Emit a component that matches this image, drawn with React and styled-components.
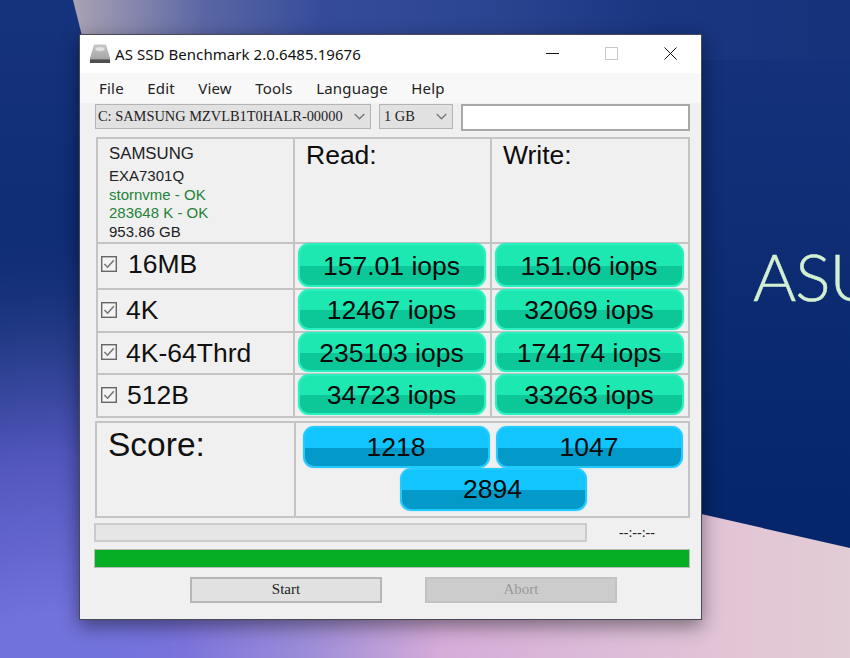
import React from "react";
import styled, { createGlobalStyle } from "styled-components";

const Global = createGlobalStyle`
  html, body { margin: 0; padding: 0; width: 850px; height: 658px; overflow: hidden; background: #0d2c70; }
  * { box-sizing: border-box; }
`;

const Desktop = styled.div`
  position: relative;
  width: 850px;
  height: 658px;
  overflow: hidden;
`;
const WallpaperArt = styled.svg`
  position: absolute;
  inset: 0;
`;
const Brand = styled.div`
  position: absolute;
  left: 753px;
  top: 234px;
  font: 300 66px/84px Lato, "Open Sans", sans-serif;
  letter-spacing: -1px;
  -webkit-text-stroke: 0.5px #d3f0d2;
  color: #d3f0d2;
  white-space: nowrap;
`;
const Window = styled.div`
  position: absolute;
  left: 79px;
  top: 34px;
  width: 623px;
  height: 586px;
  border: 1px solid rgba(45, 45, 60, 0.85);
  background: #f0f0f0;
  box-shadow: 0 6px 18px rgba(0, 0, 0, 0.45);
  display: flex;
  flex-direction: column;
`;
const TitleBar = styled.div`
  height: 38px;
  background: #fff;
  display: flex;
  align-items: center;
  padding: 0 0 1px 10px;
  flex: none;
`;
const Title = styled.span`
  margin-left: 5px;
  font: 400 15px "Noto Sans", sans-serif;
  letter-spacing: 0.06px;
  color: #111;
  white-space: nowrap;
  flex: 1;
`;
const Controls = styled.div`
  display: flex;
  align-items: center;
  gap: 46px;
  padding-right: 24px;
`;
const MenuBar = styled.div`
  height: 30px;
  background: #f8f8f8;
  display: flex;
  align-items: center;
  gap: 23.4px;
  padding: 0 0 1px 19px;
  flex: none;
`;
const MenuItem = styled.span`
  font: 400 15px "Noto Sans", sans-serif;
  letter-spacing: 0.2px;
  color: #222;
`;
const ToolBar = styled.div`
  display: flex;
  align-items: flex-start;
  gap: 8px;
  height: 34px;
  padding: 1px 0 0 15px;
  flex: none;
`;
const Select = styled.div`
  width: ${(p) => p.$w}px;
  height: 25px;
  background: #e1e1e1;
  border: 1px solid #b4b4b4;
  display: flex;
  align-items: center;
  justify-content: space-between;
  padding: 0 5px 0 2px;
  font: 400 14.4px "Liberation Serif", serif;
  color: #222;
  white-space: nowrap;
`;
const SizeLabel = styled.span`
  padding-left: 2px;
`;
const TextField = styled.div`
  width: 229px;
  height: 27px;
  background: #fff;
  border: 2px solid #a8a8a8;
`;
const Results = styled.div`
  margin-left: 16px;
  width: 594px;
  display: grid;
  grid-template-columns: 195px 195px 196px;
  grid-template-rows: 103px 44px 41px 40px 41px;
  gap: 2px;
  padding: 2px;
  background: #c4c4c4;
  flex: none;
`;
const Cell = styled.div`
  background: #f0f0f0;
  min-width: 0;
`;
const DriveCell = styled(Cell)`
  padding: 4px 0 0 11px;
  font: 400 15px/18.5px "Liberation Sans", sans-serif;
  color: #222;
`;
const DriveName = styled.div`
  font-size: 16.8px;
  line-height: 22px;
  margin-bottom: 2px;
`;
const DriveOk = styled.div`
  color: #24823a;
`;
const ColumnHead = styled(Cell)`
  padding: 0 0 0 11px;
  font: 400 26.5px/32px "Liberation Sans", sans-serif;
  color: #0c0c0c;
`;
const LabelCell = styled(Cell)`
  display: flex;
  align-items: center;
  gap: ${(p) => p.$gap}px;
  padding: 0 0 ${(p) => p.$lift || 0}px 3px;
  font: 400 26.5px "Liberation Sans", sans-serif;
  color: #111;
`;
const CheckMark = styled.svg`
  flex: none;
  margin-top: -2px;
`;
const TileCell = styled(Cell)`
  padding: 0 4px 0 3px;
  display: flex;
`;
const Tile = styled.div`
  flex: 1;
  display: flex;
  align-items: center;
  justify-content: center;
  margin: ${(p) => (p.$flush ? "0" : "-1px 0 1px")};
  padding: ${(p) => (p.$flush ? "0 1px 0 0" : "2px 1px 0 0")};
  border-radius: 11px;
  border: 2px solid ${(p) => p.$edge};
  box-shadow: 0 0 1px ${(p) => p.$edge};
  background: linear-gradient(${(p) => p.$top} 0 52%, ${(p) => p.$bottom} 52% 100%);
  font: 400 26.5px "Liberation Sans", sans-serif;
  color: #0a0a0a;
  white-space: nowrap;
`;
const ScorePanel = styled.div`
  margin: 3px 0 0 15px;
  width: 595px;
  height: 97px;
  display: grid;
  grid-template-columns: 197px 1fr;
  gap: 2px;
  padding: 2px;
  background: #c4c4c4;
  flex: none;
`;
const ScoreLabel = styled(Cell)`
  padding: 2px 0 0 11px;
  font: 400 33.5px/40px "Liberation Sans", sans-serif;
  color: #111;
`;
const ScoreGrid = styled(Cell)`
  display: grid;
  grid-template-columns: 187px 187px;
  grid-template-rows: 42px 43px;
  column-gap: 6px;
  padding: 3px 0 0 7px;
`;
const TotalTile = styled(Tile)`
  grid-column: 1 / -1;
  justify-self: center;
  width: 187px;
`;
const StatusRow = styled.div`
  display: flex;
  align-items: center;
  margin: 5px 0 0 14px;
  height: 19px;
  flex: none;
`;
const Progress = styled.div`
  width: 493px;
  height: 19px;
  background: #e6e6e6;
  border: 2px solid #cbcbcb;
`;
const Timer = styled.div`
  width: 100px;
  text-align: center;
  font: 400 14px "Liberation Serif", serif;
  color: #222;
`;
const Meter = styled.div`
  margin: 7px 0 0 14px;
  width: 596px;
  height: 19px;
  background: #06ae24;
  border: 1px solid #b9b9b9;
  flex: none;
`;
const Actions = styled.div`
  display: flex;
  gap: 43px;
  margin: 9px 0 0 110px;
`;
const ActionButton = styled.div`
  width: 192px;
  height: 26px;
  display: flex;
  align-items: center;
  justify-content: center;
  padding-bottom: 2px;
  background: ${(p) => (p.$off ? "#cccccc" : "#e1e1e1")};
  border: 2px solid ${(p) => (p.$off ? "#c2c2c2" : "#b6b6b6")};
  color: ${(p) => (p.$off ? "#9a9a9a" : "#222")};
  font: 400 15px "Liberation Serif", serif;
`;

const green = { $top: "#1ee8b2", $bottom: "#0cc899", $edge: "#2aefbe" };
const blue = { $top: "#13c5ff", $bottom: "#0399c9", $edge: "#22caff", $flush: true };

const rows = [
  { name: "16MB", read: "157.01 iops", write: "151.06 iops", gap: 11, lift: 3 },
  { name: "4K", read: "12467 iops", write: "32069 iops", gap: 9 },
  { name: "4K-64Thrd", read: "235103 iops", write: "174174 iops", gap: 9 },
  { name: "512B", read: "34723 iops", write: "33263 iops", gap: 10 },
];

const Checkbox = () => (
  <CheckMark width="16" height="16" viewBox="0 0 16 16" fill="none">
    <rect x="0.7" y="0.7" width="14.6" height="14.6" stroke="#666" strokeWidth="1.4" fill="#f4f4f4" />
    <path d="M3.4 8 6.6 11.2 12.8 4.2" stroke="#777" strokeWidth="1.6" />
  </CheckMark>
);

const Chevron = () => (
  <svg width="11" height="7" viewBox="0 0 11 7" fill="none" style={{ flex: "none" }}>
    <path d="M0.7 1 5.5 5.8 10.3 1" stroke="#777" strokeWidth="1.4" />
  </svg>
);

const DiskIcon = () => (
  <svg width="20" height="19" viewBox="0 0 20 19">
    <defs>
      <linearGradient id="disk" x1="0" y1="0" x2="0" y2="1">
        <stop offset="0" stopColor="#c8c8c8" />
        <stop offset="0.75" stopColor="#a8a8a8" />
        <stop offset="1" stopColor="#5c5c5c" />
      </linearGradient>
    </defs>
    <path d="M4 0.5H16L20 14V19H0V14Z" fill="url(#disk)" />
    <ellipse cx="10" cy="5" rx="4.5" ry="2" fill="#e2e2e2" />
    <rect x="0" y="15.5" width="20" height="3.5" fill="#4e4e4e" />
  </svg>
);

export default function App() {
  return (
    <Desktop>
      <Global />
      <WallpaperArt width="850" height="658" viewBox="0 0 850 658">
        <defs>
          <linearGradient id="base" x1="0" y1="0" x2="0" y2="1">
            <stop offset="0" stopColor="#16337d" />
            <stop offset="0.76" stopColor="#05266a" />
          </linearGradient>
          <linearGradient id="band" x1="0" y1="0" x2="1" y2="0">
            <stop offset="0" stopColor="#aaa2b4" />
            <stop offset="0.17" stopColor="#5a66a4" />
            <stop offset="0.32" stopColor="#364c9b" />
            <stop offset="0.55" stopColor="#2a4490" />
            <stop offset="0.75" stopColor="#1a3681" />
            <stop offset="1" stopColor="#16327a" />
          </linearGradient>
          <radialGradient id="glow" gradientUnits="userSpaceOnUse" cx="60" cy="720" r="530">
            <stop offset="0.2" stopColor="#7272dc" />
            <stop offset="0.5" stopColor="#5156bc" />
            <stop offset="0.7" stopColor="#2c408f" stopOpacity="0.9" />
            <stop offset="1" stopColor="#0a2a6c" stopOpacity="0" />
          </radialGradient>
          <linearGradient id="pink" gradientUnits="userSpaceOnUse" x1="0" y1="0" x2="850" y2="0">
            <stop offset="0.1" stopColor="#7272dc" stopOpacity="0" />
            <stop offset="0.22" stopColor="#7c74dc" />
            <stop offset="0.36" stopColor="#9c8cd8" />
            <stop offset="0.52" stopColor="#d6acd9" />
            <stop offset="0.72" stopColor="#dcbcd8" />
            <stop offset="0.88" stopColor="#e2c6d5" />
            <stop offset="1" stopColor="#e2ccd5" />
          </linearGradient>
        </defs>
        <rect width="850" height="658" fill="url(#base)" />
        <polygon points="73,0 850,0 850,60 88,60" fill="url(#band)" />
        <rect width="850" height="658" fill="url(#glow)" />
        <polygon points="0,354 850,548 850,658 0,658" fill="url(#pink)" />
      </WallpaperArt>
      <Brand>ASUS</Brand>
      <Window>
        <TitleBar>
          <DiskIcon />
          <Title>AS SSD Benchmark 2.0.6485.19676</Title>
          <Controls>
            <svg width="13" height="13" viewBox="0 0 13 13"><path d="M0 6.5H13" stroke="#111" strokeWidth="1" /></svg>
            <svg width="13" height="13" viewBox="0 0 13 13"><rect x="0.5" y="0.5" width="12" height="12" fill="none" stroke="#c8c8c8" /></svg>
            <svg width="13" height="13" viewBox="0 0 13 13"><path d="M0.5 0.5 12.5 12.5M12.5 0.5 0.5 12.5" stroke="#111" strokeWidth="1" /></svg>
          </Controls>
        </TitleBar>
        <MenuBar>
          {["File", "Edit", "View", "Tools", "Language", "Help"].map((m) => (
            <MenuItem key={m}>{m}</MenuItem>
          ))}
        </MenuBar>
        <ToolBar>
          <Select $w={276}>C: SAMSUNG MZVLB1T0HALR-00000<Chevron /></Select>
          <Select $w={74}><SizeLabel>1 GB</SizeLabel><Chevron /></Select>
          <TextField />
        </ToolBar>
        <Results>
          <DriveCell>
            <DriveName>SAMSUNG</DriveName>
            <div>EXA7301Q</div>
            <DriveOk>stornvme - OK</DriveOk>
            <DriveOk>283648 K - OK</DriveOk>
            <div>953.86 GB</div>
          </DriveCell>
          <ColumnHead>Read:</ColumnHead>
          <ColumnHead>Write:</ColumnHead>
          {rows.map((r) => (
            <React.Fragment key={r.name}>
              <LabelCell $gap={r.gap} $lift={r.lift}><Checkbox />{r.name}</LabelCell>
              <TileCell><Tile {...green}>{r.read}</Tile></TileCell>
              <TileCell><Tile {...green}>{r.write}</Tile></TileCell>
            </React.Fragment>
          ))}
        </Results>
        <ScorePanel>
          <ScoreLabel>Score:</ScoreLabel>
          <ScoreGrid>
            <Tile {...blue}>1218</Tile>
            <Tile {...blue}>1047</Tile>
            <TotalTile {...blue}>2894</TotalTile>
          </ScoreGrid>
        </ScorePanel>
        <StatusRow>
          <Progress />
          <Timer>--:--:--</Timer>
        </StatusRow>
        <Meter />
        <Actions>
          <ActionButton>Start</ActionButton>
          <ActionButton $off>Abort</ActionButton>
        </Actions>
      </Window>
    </Desktop>
  );
}
